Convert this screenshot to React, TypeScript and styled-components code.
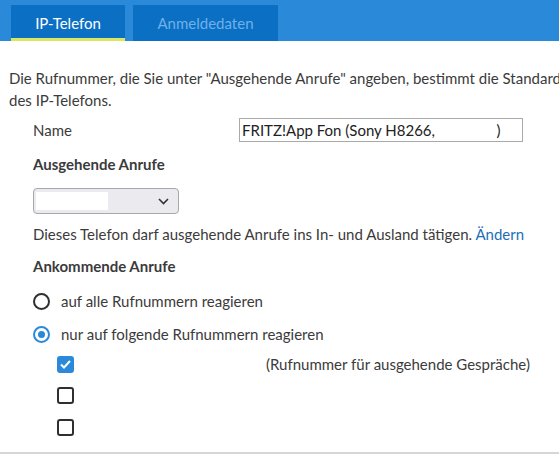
import React from "react";
import styled, { createGlobalStyle } from "styled-components";

const GlobalStyle = createGlobalStyle`
  html, body {
    margin: 0;
    padding: 0;
    background: #ffffff;
  }
  body {
    font-family: Lato, "Liberation Sans", sans-serif;
    font-size: 15px;
    color: #3b3b3b;
  }
`;

const Page = styled.div`
  width: 559px;
  height: 454px;
  overflow: hidden;
  border-bottom: 2px solid #d6d6d6;
  box-sizing: border-box;
`;

const TabBar = styled.div`
  display: flex;
  gap: 8px;
  height: 41px;
  padding: 5px 0 0 11px;
  box-sizing: border-box;
  background: #2a8ad9;
`;

const Tab = styled.div<{ $active?: boolean }>`
  box-sizing: border-box;
  width: ${(p) => (p.$active ? "114px" : "145px")};
  height: 36px;
  padding-top: 2px;
  display: flex;
  align-items: center;
  justify-content: center;
  background: #0b6fc4;
  color: ${(p) => (p.$active ? "#ffffff" : "#6fb1ea")};
  font-size: 15px;
  border-bottom: 3px solid ${(p) => (p.$active ? "#d9e761" : "transparent")};
  margin-bottom: 2px;
`;

const Content = styled.div`
  padding-left: 9px;
`;

const Intro = styled.p`
  margin: 26px 0 0;
  line-height: 22px;
  white-space: nowrap;
`;

const Form = styled.div`
  padding-left: 24px;
  display: flex;
  flex-direction: column;
`;

const NameRow = styled.div`
  display: grid;
  grid-template-columns: 206px 284px;
  align-items: center;
  margin-top: 7px;
  height: 24px;
`;

const TextInput = styled.input`
  box-sizing: border-box;
  width: 284px;
  height: 24px;
  border: 1px solid #a9a9a9;
  padding: 0 2px;
  font-family: inherit;
  font-size: 15px;
  color: #222;
  outline: none;
`;

const Heading = styled.div<{ $top: number }>`
  font-weight: 700;
  margin-top: ${(p) => p.$top}px;
  line-height: 20px;
`;

const Select = styled.div`
  box-sizing: border-box;
  margin-top: 14px;
  width: 146px;
  height: 26px;
  border: 1px solid #a8a8ac;
  border-radius: 4px;
  background: #ebebef;
  display: flex;
  align-items: center;
  justify-content: space-between;
  padding: 0 9px 0 2px;
`;

const Masked = styled.span<{ $w: number }>`
  display: inline-block;
  width: ${(p) => p.$w}px;
  height: 18px;
  background: #ffffff;
`;

const Note = styled.div`
  margin-top: 10px;
  line-height: 20px;
`;

const Link = styled.a`
  color: #1c6fb6;
  text-decoration: none;
`;

const Options = styled.div`
  margin-top: 15px;
  display: flex;
  flex-direction: column;
  gap: 13px;
`;

const RadioRow = styled.label`
  display: flex;
  align-items: center;
  gap: 11px;
  height: 20px;
`;

const Radio = styled.span<{ $on?: boolean }>`
  box-sizing: border-box;
  width: 17px;
  height: 17px;
  border-radius: 50%;
  border: 2px solid ${(p) => (p.$on ? "#2a8ad9" : "#2f2f2f")};
  display: flex;
  align-items: center;
  justify-content: center;
  &::after {
    content: "";
    width: 7px;
    height: 7px;
    border-radius: 50%;
    background: ${(p) => (p.$on ? "#2a8ad9" : "transparent")};
  }
`;

const Numbers = styled.div`
  margin-top: 11px;
  padding-left: 24px;
  display: flex;
  flex-direction: column;
  gap: 15px;
`;

const NumberRow = styled.div`
  display: grid;
  grid-template-columns: 209px auto;
  align-items: center;
  height: 17px;
`;

const Check = styled.span<{ $on?: boolean }>`
  box-sizing: border-box;
  width: 17px;
  height: 17px;
  border-radius: 3px;
  border: 2px solid ${(p) => (p.$on ? "#2a8ad9" : "#2f2f2f")};
  background: ${(p) => (p.$on ? "#2a8ad9" : "#ffffff")};
  display: flex;
  align-items: center;
  justify-content: center;
`;

const numbers = [
  { on: true, hint: "(Rufnummer für ausgehende Gespräche)" },
  { on: false, hint: "" },
  { on: false, hint: "" },
];

export default function App() {
  return (
    <Page>
      <GlobalStyle />
      <TabBar>
        <Tab $active>IP-Telefon</Tab>
        <Tab>Anmeldedaten</Tab>
      </TabBar>
      <Content>
        <Intro>
          Die Rufnummer, die Sie unter "Ausgehende Anrufe" angeben, bestimmt die Standard
          <br />
          des IP-Telefons.
        </Intro>
        <Form>
          <NameRow>
            <span>Name</span>
            <TextInput readOnly value={"FRITZ!App Fon (Sony H8266,                )"} />
          </NameRow>
          <Heading $top={12}>Ausgehende Anrufe</Heading>
          <Select>
            <Masked $w={72} />
            <svg width="11" height="7" viewBox="0 0 11 7">
              <path d="M1 1l4.5 4.5L10 1" fill="none" stroke="#333" strokeWidth="1.6" />
            </svg>
          </Select>
          <Note>
            Dieses Telefon darf ausgehende Anrufe ins In- und Ausland tätigen. <Link>Ändern</Link>
          </Note>
          <Heading $top={12}>Ankommende Anrufe</Heading>
          <Options>
            <RadioRow>
              <Radio />
              auf alle Rufnummern reagieren
            </RadioRow>
            <RadioRow>
              <Radio $on />
              nur auf folgende Rufnummern reagieren
            </RadioRow>
          </Options>
          <Numbers>
            {numbers.map((n, i) => (
              <NumberRow key={i}>
                <Check $on={n.on}>
                  {n.on && (
                    <svg width="11" height="9" viewBox="0 0 11 9">
                      <path d="M1 4.5l3 3L10 1" fill="none" stroke="#fff" strokeWidth="2" />
                    </svg>
                  )}
                </Check>
                <span>{n.hint}</span>
              </NumberRow>
            ))}
          </Numbers>
        </Form>
      </Content>
    </Page>
  );
}
